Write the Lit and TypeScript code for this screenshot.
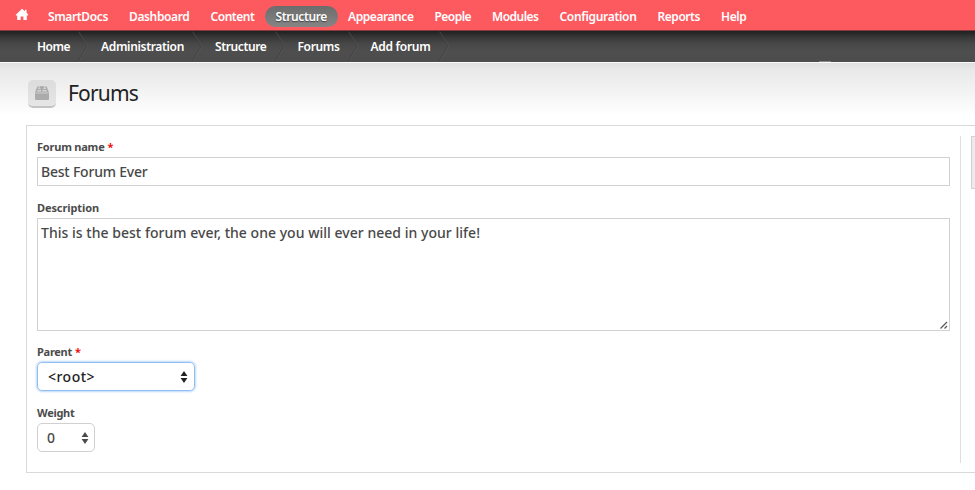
import { LitElement, html, svg, css } from "lit";
import { customElement, property } from "lit/decorators.js";

/** A single-line label whose tracking is adjusted to fill a given width. */
@customElement("fit-label")
class FitLabel extends LitElement {
  @property({ type: Number }) width = 0;
  @property() text = "";

  static styles = css`
    :host { display: block; flex: none; white-space: nowrap; }
    .label { display: inline-block; }
  `;

  firstUpdated() {
    const label = this.renderRoot.querySelector(".label") as HTMLElement;
    const natural = label.getBoundingClientRect().width;
    label.style.letterSpacing = (this.width - natural) / this.text.length + "px";
  }

  render() {
    return html`<span class="label">${this.text}</span>`;
  }
}

const MENU: [string, number][] = [
  ["SmartDocs", 60], ["Dashboard", 60.5], ["Content", 44], ["Structure", 51.5],
  ["Appearance", 65.5], ["People", 36.5], ["Modules", 46.5], ["Configuration", 77],
  ["Reports", 42.5], ["Help", 25.5],
];

const CRUMBS: [string, number][] = [
  ["Home", 33], ["Administration", 83], ["Structure", 51.5], ["Forums", 42], ["Add forum", 60],
];

const stepper = svg`<path d="M4 0 7.4 5H.6ZM.6 7H7.4L4 12Z" fill="currentColor"/>`;

@customElement("app-root")
class AppRoot extends LitElement {
  static styles = css`
    * { box-sizing: border-box; }
    :host {
      display: block; height: 490px; overflow: hidden; background: #fff;
      font-family: "Noto Sans", "Open Sans", sans-serif; color: #4b4b4b;
    }
    .toolbar {
      height: 31px; display: flex; align-items: center; padding: 0 0 0 15px;
      background: #fd5a60; border-bottom: 1px solid #873b3e;
      color: #fff; font-size: 12px; font-weight: 600;
    }
    .home { width: 14px; height: 13px; margin: 0 8.5px 2px 0; display: block; }
    .item { height: 21px; line-height: 22px; padding: 0 10.5px; border-radius: 11px; flex: none; margin-top: 2px; }
    .item.active {
      background: linear-gradient(#6c6c6c, #858585); text-shadow: 0 1px 1px #444;
    }
    .crumbs {
      height: 31px; display: flex; align-items: center; padding-left: 37px;
      background:
        linear-gradient(#868686, #868686) 819px 100% / 12px 1px no-repeat border-box,
        linear-gradient(#202020, #373737 20%, #484848 42%, #4e4e4e 65%, #4c4c4c);
      color: #fff; font-size: 12px; font-weight: 600; line-height: 20px;
    }
    .crumb { display: flex; align-items: center; }
    .crumb fit-label { margin-top: 1px; }
    .sep { width: 12px; height: 31px; margin: 0 11px 0 8px; display: block; }
    .heading {
      height: 63px; display: flex; align-items: flex-start; padding: 17px 0 0 28px;
      border-top: 1px solid #fbfbfb;
      background: linear-gradient(#dfdfdf, #e9e9e9 12%, #f2f2f2 42%, #fbfbfb 72%, #fff 85%);
    }
    .badge {
      width: 28px; height: 28px; margin-right: 12px; border-radius: 5px;
      background: linear-gradient(#dcdcdc, #e6e6e6); border-bottom: 2px solid #c4c4c4;
      display: flex; align-items: center; justify-content: center;
    }
    .title { font-size: 21px; line-height: 26px; color: #222; }
    .panel {
      margin-left: 26px; height: 348px; border: 1px solid #d9d9d9; border-right: 0;
      display: flex; padding: 10px 0 9px 10px;
    }
    .form { width: 924px; flex: none; border-right: 1px solid #dedede; padding-right: 10px; }
    .name { display: flex; height: 21px; line-height: 22px; font-size: 11px; font-weight: 700; }
    .req { color: #f01010; margin-left: 3px; }
    .field {
      border: 1px solid #d2d2d2; height: 29px; padding: 4px 3px; margin-bottom: 11px;
      font-size: 14px; line-height: 20px; font-weight: 500; color: #484848;
    }
    .area { height: 113px; margin-bottom: 10px; position: relative; }
    .grip { position: absolute; right: 1px; bottom: 1px; width: 8px; height: 8px; }
    .select {
      height: 29px; width: 58px; border: 1px solid #d0d0d0; border-radius: 5px;
      padding: 0 5px 0 9px; display: flex; align-items: center; justify-content: space-between;
      font-size: 14px; font-weight: 500; line-height: 20px;
    }
    .select.focus {
      width: 158px; height: 29px; margin-bottom: 11px; padding-left: 10px; padding-right: 6px;
      color: #222; border-color: #94bdf0; box-shadow: 0 0 2px 1px #bcd9fa;
    }
    .arrows { width: 8px; height: 12px; display: block; }
    .side {
      margin-left: 10px; height: 53px; flex: 1; background: #ebebeb;
      border: 1px solid #d2d2d2; border-right: 0;
    }
  `;

  render() {
    return html`
      <nav class="toolbar">
        <svg class="home" viewBox="0 0 14 13" fill="#fff">
          <path d="M7 .7 10 3.3V1.8h1.5v2.8L13.4 7 12.5 7.5H11.8V12H8.4V8.5H5.6V12H2.2V7.5H1.1L.6 7Z"/>
        </svg>
        ${MENU.map(([t, w]) => html`<div class="item ${t === "Structure" ? "active" : ""}">
          <fit-label .text=${t} .width=${w}></fit-label></div>`)}
      </nav>
      <nav class="crumbs">
        ${CRUMBS.map(([t, w]) => html`<div class="crumb">
          <fit-label .text=${t} .width=${w}></fit-label>
          <svg class="sep" viewBox="0 0 12 31" fill="none">
            <path d="M0 0 9 15 0 30" stroke="#3c3c3c" stroke-opacity=".6"/>
            <path d="M1 1 10 15 1 30" stroke="#606060" stroke-opacity=".4"/>
          </svg></div>`)}
      </nav>
      <header class="heading">
        <div class="badge">
          <svg width="16" height="16" viewBox="0 0 16 16">
            <path d="M3.3 1.5H12.7L15 7.5V14Q15 15 14 15H2Q1 15 1 14V7.5Z" fill="#ababab"/>
            <path d="M1.4 8H14.6" stroke="#cecece"/>
            <path d="M4.5 2.2H7V4H4Zm4 0h3l.5 1.8H8.5ZM3.5 5H7v1.5H3Zm5 0h3.8l.5 1.5H8.5Z" fill="#d5d5d5"/>
            <path d="M6.2 1.5H9.5V3.5H6.2Z" fill="#a3a3a3"/>
          </svg>
        </div>
        <fit-label class="title" .text=${"Forums"} .width=${70}></fit-label>
      </header>
      <main class="panel">
        <section class="form">
          <div class="name"><fit-label .text=${"Forum name"} .width=${67.5}></fit-label><span class="req">*</span></div>
          <div class="field"><fit-label .text=${"Best Forum Ever"} .width=${106.5}></fit-label></div>
          <div class="name"><fit-label .text=${"Description"} .width=${62}></fit-label></div>
          <div class="field area">
            <fit-label .text=${"This is the best forum ever, the one you will ever need in your life!"} .width=${439}></fit-label>
            <svg class="grip" viewBox="0 0 8 8"><path d="M.5 7.5 7 1M4.5 7.5 7 5" stroke="#555" stroke-width="1.2"/></svg>
          </div>
          <div class="name"><fit-label .text=${"Parent"} .width=${35}></fit-label><span class="req">*</span></div>
          <div class="select focus">
            <fit-label .text=${"<root>"} .width=${47}></fit-label>
            <svg class="arrows" viewBox="0 0 8 12">${stepper}</svg>
          </div>
          <div class="name"><fit-label .text=${"Weight"} .width=${37.5}></fit-label></div>
          <div class="select">
            <fit-label .text=${"0"} .width=${8.5}></fit-label>
            <svg class="arrows" viewBox="0 0 8 12">${stepper}</svg>
          </div>
        </section>
        <aside class="side"></aside>
      </main>
    `;
  }
}
